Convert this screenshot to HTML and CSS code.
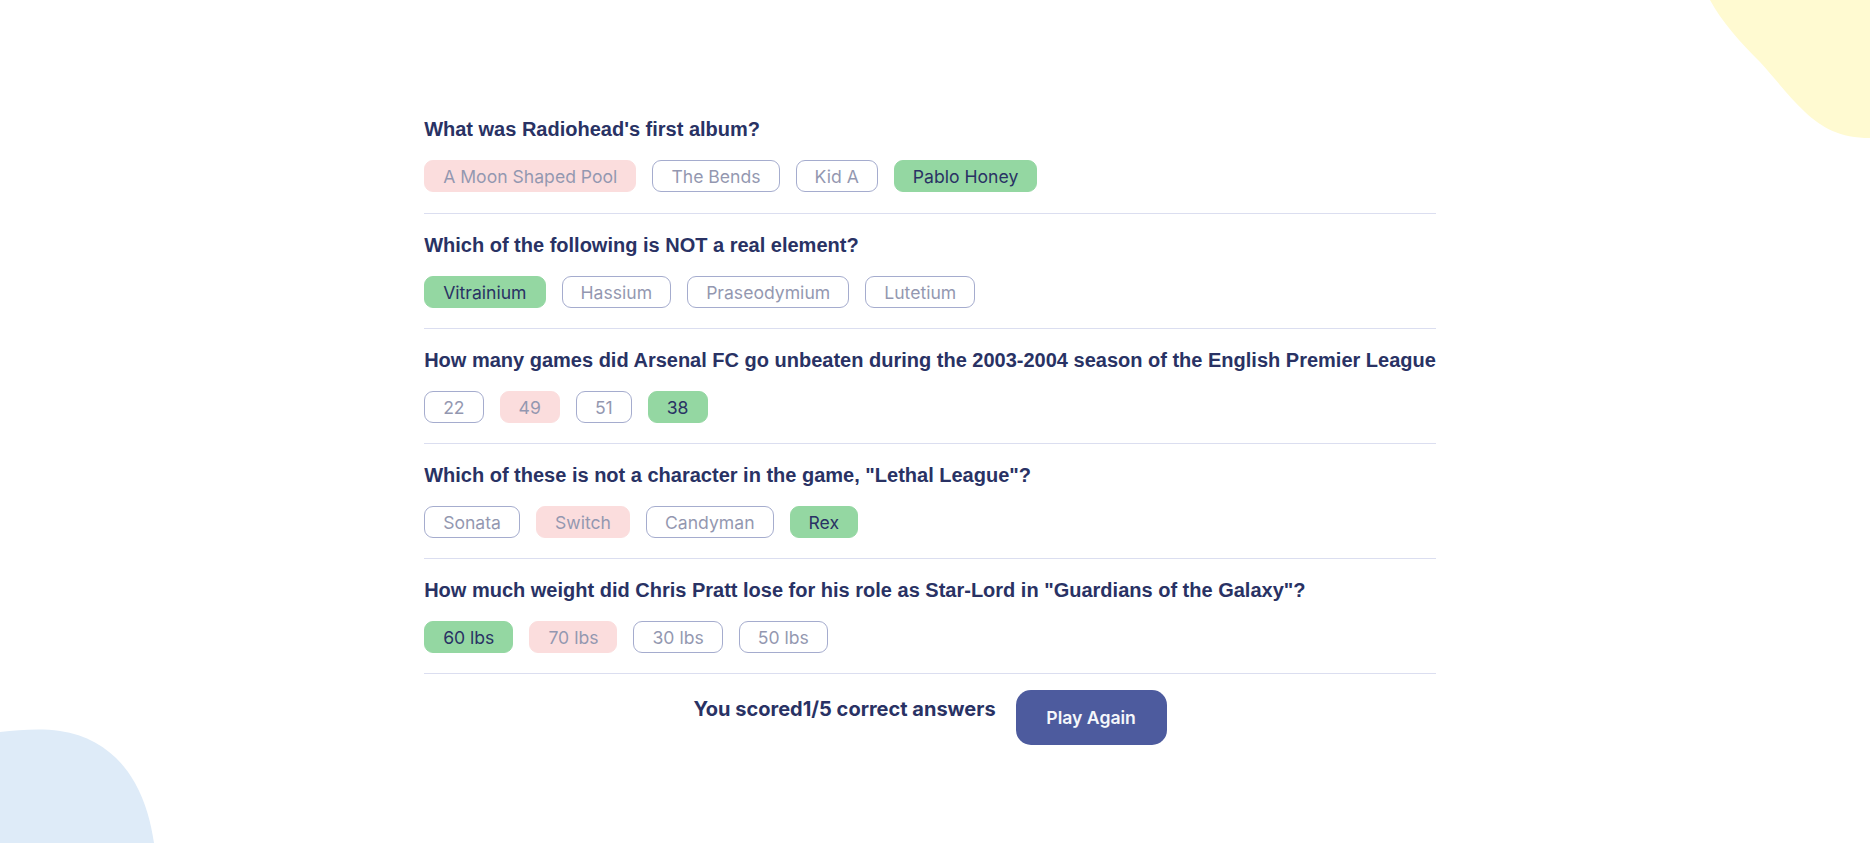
FILE: index.html
```html
<!DOCTYPE html>
<html lang="en">
<head>
<meta charset="utf-8">
<title>Quizzical</title>
<link rel="stylesheet" href="styles.css">
</head>
<body>
<svg class="blob blob-yellow" width="160" height="140" viewBox="0 0 160 140" aria-hidden="true">
  <path d="M0 0 H160 V138 C130 138 112 128 95 112 C80 98 68 82 50 62 C30 42 12 22 0 0 Z" fill="#FFFAD1"/>
</svg>
<svg class="blob blob-blue" width="160" height="115" viewBox="0 0 160 115" aria-hidden="true">
  <path d="M0 4 C20 2 40 0 60 3 C95 8 120 28 135 55 C146 75 151 95 154 115 H0 Z" fill="#DEEBF8"/>
</svg>
<main class="page">
  <div class="quiz">
    <section class="question">
      <h2 class="q-title">What was Radiohead's first album?</h2>
      <div class="options">
        <span class="opt wrong">A Moon Shaped Pool</span>
        <span class="opt faded">The Bends</span>
        <span class="opt faded">Kid A</span>
        <span class="opt right">Pablo Honey</span>
      </div>
    </section>
    <section class="question">
      <h2 class="q-title">Which of the following is NOT a real element?</h2>
      <div class="options">
        <span class="opt right">Vitrainium</span>
        <span class="opt faded">Hassium</span>
        <span class="opt faded">Praseodymium</span>
        <span class="opt faded">Lutetium</span>
      </div>
    </section>
    <section class="question">
      <h2 class="q-title">How many games did Arsenal FC go unbeaten during the 2003-2004 season of the English Premier League</h2>
      <div class="options">
        <span class="opt faded">22</span>
        <span class="opt wrong">49</span>
        <span class="opt faded">51</span>
        <span class="opt right">38</span>
      </div>
    </section>
    <section class="question">
      <h2 class="q-title">Which of these is not a character in the game, "Lethal League"?</h2>
      <div class="options">
        <span class="opt faded">Sonata</span>
        <span class="opt wrong">Switch</span>
        <span class="opt faded">Candyman</span>
        <span class="opt right">Rex</span>
      </div>
    </section>
    <section class="question">
      <h2 class="q-title">How much weight did Chris Pratt lose for his role as Star-Lord in "Guardians of the Galaxy"?</h2>
      <div class="options">
        <span class="opt right">60 lbs</span>
        <span class="opt wrong">70 lbs</span>
        <span class="opt faded">30 lbs</span>
        <span class="opt faded">50 lbs</span>
      </div>
    </section>
    <div class="result">
      <p class="score">You scored1/5 correct answers</p>
      <button class="again" type="button">Play Again</button>
    </div>
  </div>
</main>
</body>
</html>
```

FILE: styles.css
```css
* { box-sizing: border-box; }

html, body {
  margin: 0;
  padding: 0;
  background: #ffffff;
}

body {
  position: relative;
  min-height: 843px;
  overflow: hidden;
  font-family: Inter, "Liberation Sans", sans-serif;
  color: #293264;
}

.blob {
  position: absolute;
  display: block;
}

.blob-yellow {
  top: 0;
  right: 0;
}

.blob-blue {
  bottom: 0;
  left: 0;
}

.page {
  position: relative;
  display: flex;
  justify-content: center;
  padding: 101px 10px 0 0;
}

.quiz {
  display: flex;
  flex-direction: column;
}

.question {
  padding: 20px 0 20px;
  border-bottom: 1px solid #DBDEF0;
}

.question:first-child {
  padding: 17px 0 21px;
}

.q-title {
  margin: 0 0 20px;
  font-family: "Liberation Sans", Arial, sans-serif;
  font-weight: 700;
  font-size: 20px;
  line-height: 22px;
  color: #293264;
}

.options {
  display: flex;
  gap: 16px;
}

.opt {
  display: inline-flex;
  align-items: center;
  height: 32px;
  padding: 0 18px;
  border: 1px solid #4D5B9E;
  border-radius: 9px;
  font-family: Inter, sans-serif;
  font-size: 17.6px;
  color: #293264;
}

.opt.faded {
  opacity: 0.5;
}

.opt.wrong {
  background: #F8BCBC;
  border-color: #F8BCBC;
  opacity: 0.5;
}

.opt.right {
  background: #94D7A2;
  border-color: #94D7A2;
}

.result {
  display: flex;
  justify-content: center;
  align-items: flex-start;
  gap: 20px;
  padding-top: 16px;
}

.score {
  margin: 0;
  padding-top: 8px;
  font-family: Inter, sans-serif;
  font-weight: 700;
  font-size: 20px;
  line-height: 22px;
  color: #293264;
}

.again {
  width: 151px;
  height: 55px;
  border: none;
  border-radius: 15px;
  background: #4D5B9E;
  color: #F5F7FB;
  font-family: Inter, sans-serif;
  font-weight: 600;
  font-size: 17.6px;
  cursor: pointer;
}
```
